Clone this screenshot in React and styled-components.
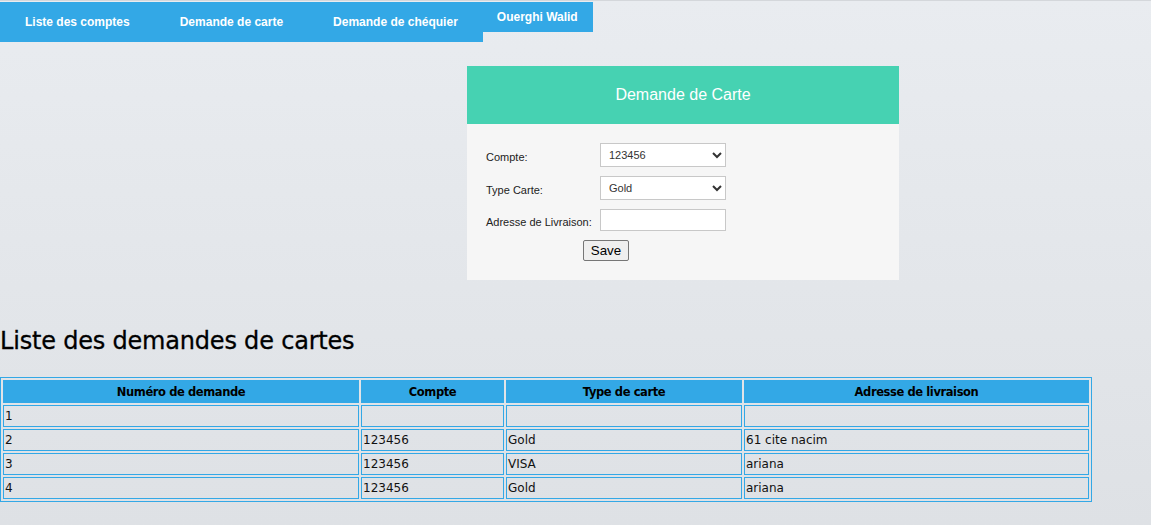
import React from 'react';
import styled, { createGlobalStyle } from 'styled-components';

const GlobalStyle = createGlobalStyle`
  html, body {
    margin: 0;
    padding: 0;
  }
  body {
    min-height: 525px;
    background: linear-gradient(to bottom, #e9ecf0, #dee1e5);
    border-top: 1px solid #d4d7db;
    font-family: "Liberation Sans", Arial, sans-serif;
  }
`;

const rows = [
  { id: '1', compte: '', type: '', adresse: '' },
  { id: '2', compte: '123456', type: 'Gold', adresse: '61 cite nacim' },
  { id: '3', compte: '123456', type: 'VISA', adresse: 'ariana' },
  { id: '4', compte: '123456', type: 'Gold', adresse: 'ariana' },
];

const columns = [
  { key: 'id', label: 'Numéro de demande', width: 356 },
  { key: 'compte', label: 'Compte', width: 143 },
  { key: 'type', label: 'Type de carte', width: 236 },
  { key: 'adresse', label: 'Adresse de livraison', width: 345 },
];

export default function App() {
  return (
    <Page>
      <GlobalStyle />
      <TopBar>
        <NavLinks>
          <NavItem href="#">Liste des comptes</NavItem>
          <NavItem href="#">Demande de carte</NavItem>
          <NavItem href="#">Demande de chéquier</NavItem>
        </NavLinks>
        <UserTag>Ouerghi Walid</UserTag>
      </TopBar>

      <Card>
        <CardHeader>Demande de Carte</CardHeader>
        <CardBody>
          <FormGrid>
            <Label>Compte:</Label>
            <Select defaultValue="123456">
              <option>123456</option>
            </Select>
            <Label>Type Carte:</Label>
            <Select defaultValue="Gold">
              <option>Gold</option>
              <option>VISA</option>
            </Select>
            <Label>Adresse de Livraison:</Label>
            <TextInput type="text" />
            <ButtonCell>
              <SaveButton type="button">Save</SaveButton>
            </ButtonCell>
          </FormGrid>
        </CardBody>
      </Card>

      <Title>Liste des demandes de cartes</Title>

      <Table>
        <colgroup>
          {columns.map((c) => (
            <col key={c.key} style={{ width: c.width }} />
          ))}
        </colgroup>
        <thead>
          <tr>
            {columns.map((c) => (
              <Th key={c.key}>{c.label}</Th>
            ))}
          </tr>
        </thead>
        <tbody>
          {rows.map((r) => (
            <tr key={r.id}>
              {columns.map((c) => (
                <Td key={c.key}>{r[c.key]}</Td>
              ))}
            </tr>
          ))}
        </tbody>
      </Table>
    </Page>
  );
}

const Page = styled.div`
  padding-top: 1px;
`;

const TopBar = styled.nav`
  display: flex;
  align-items: flex-start;
`;

const NavLinks = styled.div`
  display: flex;
  background: #33a8e6;
  height: 40px;
`;

const NavItem = styled.a`
  display: block;
  padding: 0 25px;
  line-height: 40px;
  color: #fff;
  font-size: 12px;
  font-weight: bold;
  text-decoration: none;
`;

const UserTag = styled.div`
  background: #33a8e6;
  height: 30px;
  line-height: 30px;
  padding: 0 15px 0 14px;
  color: #fff;
  font-size: 12px;
  font-weight: bold;
`;

const Card = styled.section`
  width: 432px;
  margin: 24px 0 0 467px;
  background: #f6f6f6;
`;

const CardHeader = styled.div`
  background: #46d2b2;
  height: 58px;
  display: flex;
  align-items: center;
  justify-content: center;
  color: #fff;
  font-size: 16px;
`;

const CardBody = styled.div`
  padding: 19px;
`;

const FormGrid = styled.div`
  display: grid;
  grid-template-columns: 114px 126px;
  row-gap: 9px;
  align-items: center;
`;

const Label = styled.label`
  font-size: 11px;
  color: #222;
  padding-top: 3px;
`;

const Select = styled.select`
  height: 24px;
  border: 1px solid #c8c8c8;
  border-radius: 0;
  background: #fff;
  font-size: 11px;
  font-family: "Liberation Sans", Arial, sans-serif;
  color: #333;
  padding: 0 4px;
  outline: none;
`;

const TextInput = styled.input`
  height: 22px;
  box-sizing: border-box;
  border: 1px solid #c8c8c8;
  background: #fff;
  padding: 0 4px;
  outline: none;
`;

const ButtonCell = styled.div`
  grid-column: 1 / span 2;
  display: flex;
  justify-content: center;
`;

const SaveButton = styled.button`
  height: 21px;
  padding: 0 7px;
  font-size: 13.33px;
  font-family: "Liberation Sans", Arial, sans-serif;
  color: #000;
  background: #efefef;
  border: 1px solid #767676;
  border-radius: 2px;
`;

const Title = styled.h2`
  margin: 47px 0 22px 0;
  font-family: "DejaVu Sans", sans-serif;
  font-weight: normal;
  font-size: 24px;
  line-height: 28px;
  letter-spacing: -0.2px;
  color: #000;
  -webkit-text-stroke: 0.3px #000;
`;

const Table = styled.table`
  width: 1092px;
  table-layout: fixed;
  border: 1px solid #33a8e6;
  border-spacing: 2px;
  font-family: "DejaVu Sans", sans-serif;
  font-size: 12px;
`;

const Th = styled.th`
  background: #33a8e6;
  border: 1px solid #33a8e6;
  height: 21px;
  padding: 0 2px;
  font-size: 11.5px;
  letter-spacing: -0.4px;
  font-weight: bold;
  color: #000;
  text-align: center;
`;

const Td = styled.td`
  border: 1px solid #33a8e6;
  height: 20px;
  padding: 0 1px;
  color: #111;
  text-align: left;
`;
